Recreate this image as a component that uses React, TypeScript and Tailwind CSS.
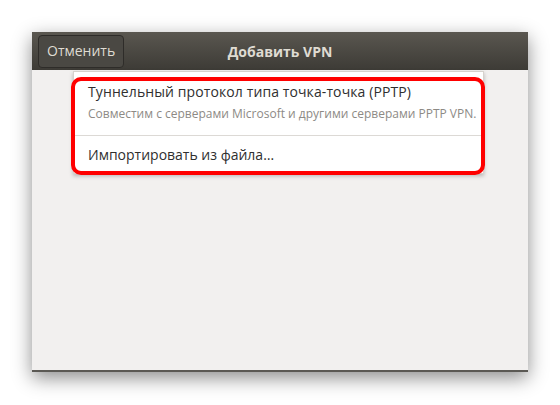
export default function App() {
  const font = { fontFamily: '"Open Sans", "DejaVu Sans", sans-serif' };
  return (
    <div className="w-[560px] h-[405px] bg-white pt-[32px] pl-[32px]" style={font}>
      {/* dialog window */}
      <div className="w-[496px] h-[340px] flex flex-col bg-[#f2f0ef] border-b-2 border-[#5b5954] shadow-[0_6px_18px_rgba(0,0,0,0.45)]">
        {/* header bar */}
        <div className="relative h-[38px] shrink-0 flex items-center px-[6px] bg-gradient-to-b from-[#5a5750] to-[#3d3b36]">
          <button className="h-[33px] px-[8px] rounded-[4px] border border-[#2e2c29] bg-[#4a4843] text-[#dfdbd2] text-[14px] leading-none">
            Отменить
          </button>
          <div className="absolute inset-0 flex items-center justify-center pointer-events-none">
            <span className="text-[#dfdbd2] text-[14px] font-bold">Добавить VPN</span>
          </div>
        </div>

        {/* list */}
        <div className="relative mt-[1px] ml-[41px] w-[411px]">
          <div className="bg-white border border-[#d6d2cd] shadow-[0_2px_4px_rgba(0,0,0,0.25)]">
            <div className="h-[64px] pl-[14px] pt-[10px] border-b border-[#dcd9d5]">
              <div className="text-[#2f2f2f] text-[14px] leading-[20px] tracking-[0.1px]">Туннельный протокол типа точка-точка (PPTP)</div>
              <div className="text-[#8d8a85] text-[12px] leading-[18px] mt-[3px]">
                Совместим с серверами Microsoft и другими серверами PPTP VPN.
              </div>
            </div>
            <div className="h-[37px] pl-[14px] flex items-center text-[#2f2f2f] text-[14px]">Импортировать из файла…</div>
          </div>
          {/* red annotation frame */}
          <div className="absolute left-[-2px] top-[6px] w-[414px] h-[98px] border-[4px] border-[#ff0000] rounded-[10px] pointer-events-none" />
        </div>
      </div>
    </div>
  );
}
